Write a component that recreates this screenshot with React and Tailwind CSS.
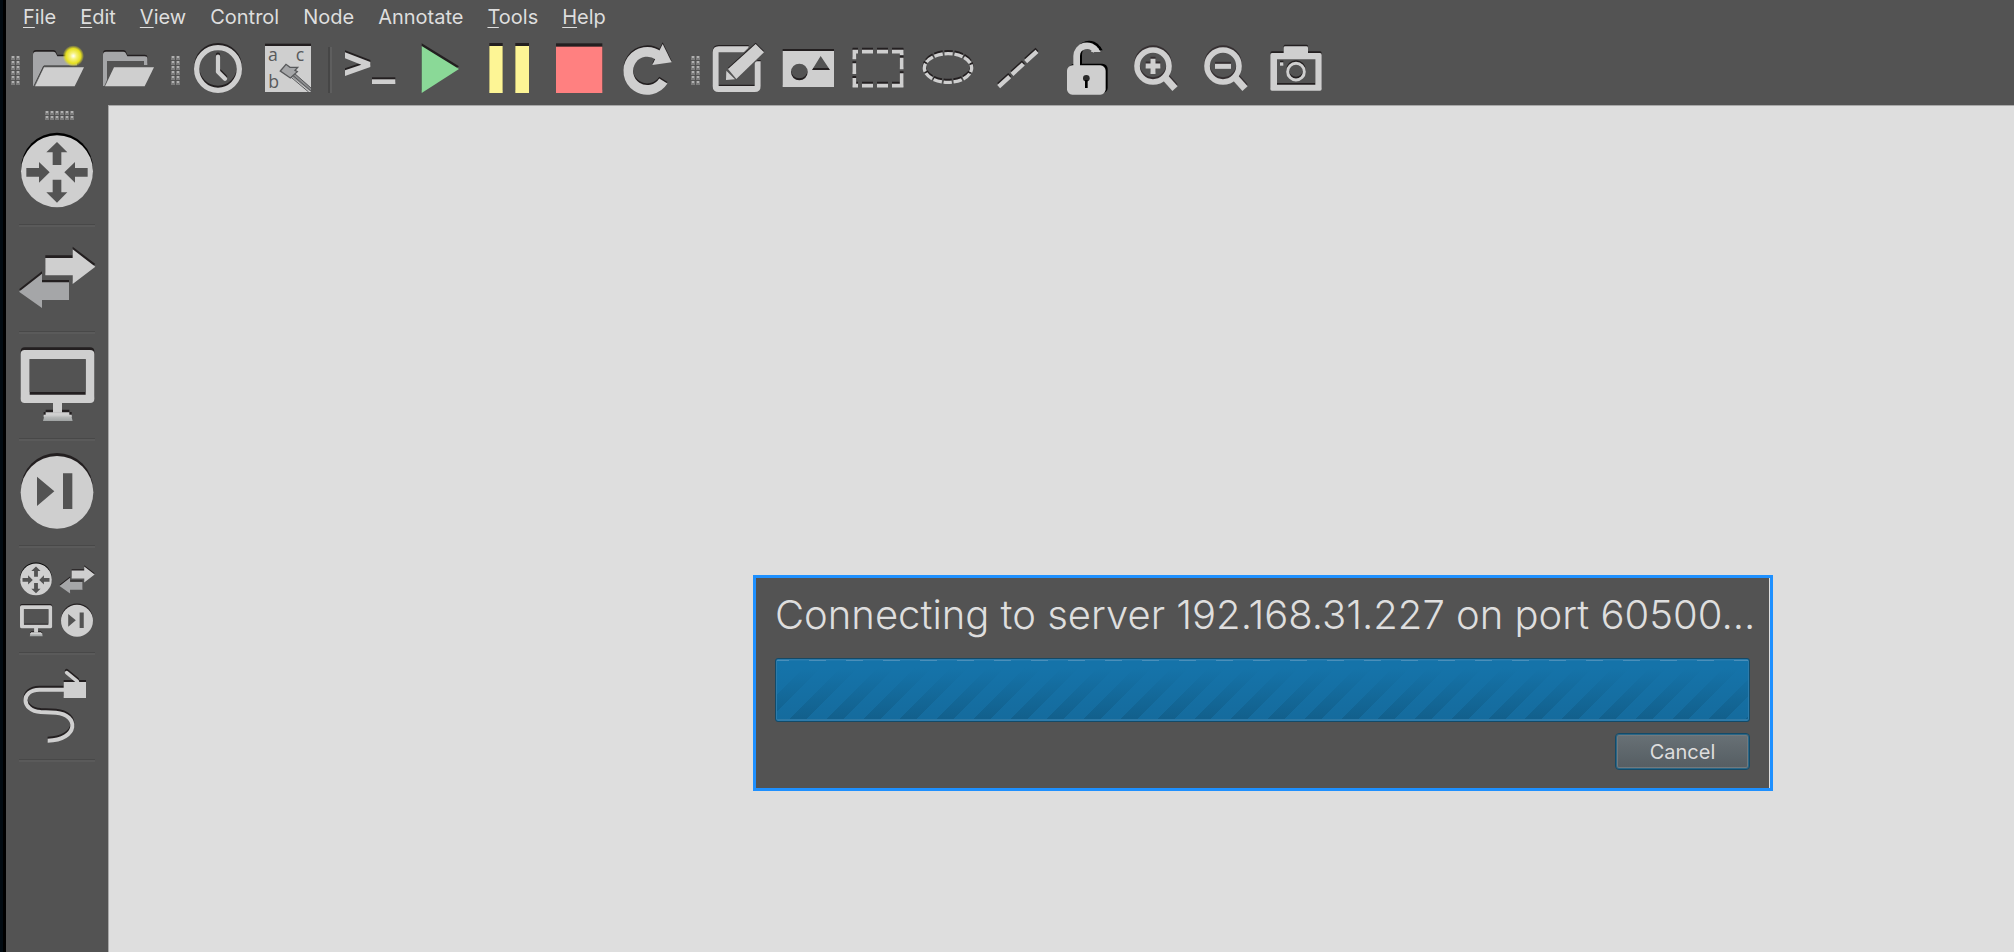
import React from "react";

const LIGHT = "#cfcfcf";

/* Draws a shape twice: a dark copy raised slightly, then the shape itself. */
function Raised({ color = LIGHT, shadow = "#231f20", lift = 6, children }) {
  return (
    <>
      <g transform={`translate(0 ${-lift})`} color={shadow}>{children}</g>
      <g color={color}>{children}</g>
    </>
  );
}

const fill = { fill: "currentColor", fillRule: "evenodd" };
const line = { fill: "none", stroke: "currentColor" };

function FolderFront({ x }) {
  return <path d={`M${x} 202H${x + 120}L${x + 92} 259H${x - 27}Z`} fill={LIGHT} />;
}

function NewFolderIcon() {
  return (
    <>
      <defs>
        <radialGradient id="glow">
          <stop offset="0" stopColor="#ffffff" />
          <stop offset="0.3" stopColor="#f6f27a" />
          <stop offset="0.7" stopColor="#e6e020" />
          <stop offset="1" stopColor="#e6e020" stopOpacity="0" />
        </radialGradient>
      </defs>
      <Raised color="#a5a6a8" lift={5}>
        <path {...fill} d="M99 258V164Q99 155 108 155H160Q167 155 170 165L172 169H224Q231 169 231 176V196H132L104 258Z" />
      </Raised>
      <path d="M131 198L102 258" stroke="#444" strokeWidth="3" />
      <FolderFront x={132} />
      <circle cx="220" cy="168" r="32" fill="url(#glow)" />
    </>
  );
}

function OpenFolderIcon() {
  return (
    <>
      <Raised color="#a5a6a8" lift={5}>
        <path {...fill} d="M309 258V164Q309 155 318 155H370Q377 155 380 165L382 169H434Q442 169 442 176V195H432V183H321V240L313 258Z" />
      </Raised>
      <FolderFront x={342} />
    </>
  );
}

function ClockIcon() {
  return (
    <Raised>
      <circle {...line} cx="654" cy="207" r="64" strokeWidth="16" />
      <path {...line} d="M654 170V215L675 236" strokeWidth="13" strokeLinecap="round" strokeLinejoin="round" />
    </Raised>
  );
}

function LabelsIcon() {
  return (
    <>
      <rect x="795" y="131" width="138" height="12" fill="#231f20" />
      <rect x="795" y="138" width="138" height="138" fill={LIGHT} />
      <g fill="#58595b" fontFamily="'Open Sans', sans-serif" fontSize="53">
        <text x="804" y="184">a</text>
        <text x="887" y="184">c</text>
        <text x="805" y="263">b</text>
      </g>
      <path d="M868 224L933 276V263L880 217Z" fill="#8c8d8f" />
      <path d="M870 229L926 276M881 218L933 264M875 223L933 273" fill="none" stroke="#58595b" strokeWidth="3" />
      <path d="M841 213L858 193L870 202L893 202L885 211L892 215L871 234Z" fill="#a5a6a8" stroke="#58595b" strokeWidth="4" />
    </>
  );
}

function TerminalIcon() {
  return (
    <Raised>
      <path {...fill} d="M75 157L151 186V201L75 228V211L124 194L75 175Z" />
      <rect {...fill} x="156" y="238" width="70" height="14" />
    </Raised>
  );
}

function PlayIcon() {
  return (
    <Raised color="#8ad997" lift={8}>
      <path {...fill} d="M305 138L417 207L305 279Z" />
    </Raised>
  );
}

function PauseIcon() {
  return (
    <Raised color="#fdf595" lift={9}>
      <path {...fill} d="M508 138H548V279H508ZM586 138H627V279H586Z" />
    </Raised>
  );
}

function StopIcon() {
  return (
    <Raised color="#ff8080" lift={10}>
      <rect {...fill} x="708" y="140" width="139" height="139" />
    </Raised>
  );
}

function ReloadIcon() {
  return (
    <Raised lift={5}>
      <path {...line} d="M1016 167A57 57 0 1 0 1030 243" strokeWidth="29" />
      <path {...fill} d="M1028 132L1055 187L997 195L1004 180Z" />
    </Raised>
  );
}

function NoteIcon() {
  return (
    <>
      <Raised lift={4}>
        <path {...line} d="M236 148H146Q137 148 137 157V258Q137 267 146 267H254Q263 267 263 258V184" strokeWidth="18" />
      </Raised>
      <path d="M169 208L257 122L290 155L196 243Z" fill="#535353" />
      <Raised lift={4}>
        <path {...fill} d="M174 207L257 132L282 157L199 237Z" />
      </Raised>
      <path d="M169 212L195 238L168 240Z" fill={LIGHT} />
    </>
  );
}

function ImageIcon() {
  return (
    <Raised>
      <path {...fill} d="M338 153H492V261H338ZM426 210H480L452 168ZM388 191A25 25 0 1 0 388 241A25 25 0 1 0 388 191Z" />
    </Raised>
  );
}

function RectIcon() {
  return (
    <Raised>
      <path {...line} strokeWidth="11" d="M548 155H564M576 155H609M621 155H654M666 155H700M548 257H564M576 257H609M621 257H654M666 257H700M553 150V178M553 190V222M553 234V262M695 150V165M695 173V208M695 220V262" />
    </Raised>
  );
}

function EllipseIcon() {
  return (
    <Raised>
      <ellipse {...line} cx="834" cy="204" rx="71" ry="43" strokeWidth="10" pathLength="120" strokeDasharray="8.3 1.7" strokeDashoffset="4" />
    </Raised>
  );
}

function LineIcon() {
  return (
    <Raised>
      <path {...line} strokeWidth="13" d="M986 260L1019 230M1026 223L1060 192M1067 185L1101 154" />
    </Raised>
  );
}

function LockShape() {
  return (
    <>
      <path {...line} d="M170 205V168A31 31 0 0 1 228 153" strokeWidth="20" />
      <path {...fill} d="M213 156H242L234 144L220 142Z" />
      <rect {...fill} x="141" y="196" width="116" height="88" rx="16" />
    </>
  );
}

function LockIcon() {
  return (
    <>
      <g color="#000" transform="translate(6 -5)"><LockShape /></g>
      <g color={LIGHT}><LockShape /></g>
      <circle cx="199" cy="235" r="10" fill="#2b2b2b" />
      <path d="M195 240H203V264H195Z" fill="#000" />
    </>
  );
}

function MagnifierIcon({ x, plus }) {
  return (
    <Raised shadow="#352f31">
      <circle {...line} cx={x} cy="198" r="48" strokeWidth="17" />
      <path {...line} d={`M${x + 34} 230L${x + 66} 266`} strokeWidth="21" />
      <path {...line} d={plus ? `M${x - 22} 198H${x + 22}M${x} 176V222` : `M${x - 24} 199H${x + 24}`} strokeWidth="15" />
    </Raised>
  );
}

function CameraIcon() {
  return (
    <Raised lift={5}>
      <path {...fill} d="M756 159H791V143Q791 139 796 139H859Q864 139 864 143V159H900Q905 159 905 165V267Q905 272 900 272H756Q751 272 751 267V165Q751 159 756 159ZM771 178V254H886V178Z" />
      <circle {...line} cx="828" cy="215" r="25" strokeWidth="9" />
      <rect {...fill} x="780" y="187" width="10" height="10" />
    </Raised>
  );
}

function RouterShape() {
  return (
    <>
      <circle cx="171" cy="206" r="108" fill="#000" />
      <circle cx="171" cy="214" r="108" fill={LIGHT} />
      <g fill="#535353">
        <path d="M171 126L202 157H184V195H158V157H139Z" />
        <path d="M171 308L202 277H184V239H158V277H139Z" />
        <path d="M149 217L117 186V204H79V230H117V248Z" />
        <path d="M193 217L225 186V204H263V230H225V248Z" />
      </g>
    </>
  );
}

function SwitchShape() {
  return (
    <>
      <Raised lift={8}>
        <path {...fill} d="M136 474H218V448L286 500L218 552V526H136Z" />
      </Raised>
      <Raised color="#a5a6a8" lift={7}>
        <path {...fill} d="M207 547H126V521L57 575L126 624V600H207Z" />
      </Raised>
    </>
  );
}

function HostShape() {
  return (
    <>
      <defs>
        <linearGradient id="base" x1="0" y1="0" x2="0" y2="1">
          <stop offset="0" stopColor="#cfcfcf" />
          <stop offset="0.4" stopColor="#b4b6b6" />
          <stop offset="1" stopColor="#9fa3a3" />
        </linearGradient>
      </defs>
      <Raised lift={8}>
        <path {...fill} d="M74 60H270Q283 60 283 72V206Q283 219 270 219H74Q62 219 62 206V72Q62 60 74 60ZM89 88V194H257V88Z" />
        <path {...fill} d="M137 247H208V254H215V262H131V254H137Z" />
      </Raised>
      <path d="M89 87H257V186H89Z" fill="#535353" />
      <path d="M159 215H186V248H159Z" fill={LIGHT} />
      <path d="M134 255H213L218 273H129Z" fill="url(#base)" />
    </>
  );
}

function NextShape() {
  return (
    <>
      <circle cx="171" cy="477" r="108" fill="#231f20" />
      <circle cx="171" cy="487" r="109" fill={LIGHT} />
      <path d="M111 440L163 484L111 528ZM189 430H217V537H189Z" fill="#535353" />
    </>
  );
}

function AllDevicesShape() {
  return (
    <>
      <g transform="translate(108 117) scale(.44) translate(-171 -211)"><RouterShape /></g>
      <g transform="translate(231 118) scale(.46) translate(-171 -532)"><SwitchShape /></g>
      <g transform="translate(108 240) scale(.436) translate(-172 -162)"><HostShape /></g>
      <g transform="translate(231 241) scale(.44) translate(-171 -484)"><NextShape /></g>
    </>
  );
}

function CableShape() {
  return (
    <Raised>
      <path {...line} strokeWidth="12" d="M192 449H118C62 449 62 512 122 516L168 518C238 524 236 600 143 602" />
      <path {...fill} d="M191 426H258V474H191Z" />
      <path {...line} strokeWidth="11" strokeLinecap="round" d="M200 398L232 424" />
    </Raised>
  );
}

const groups = [
  [
    ["New session", "66", NewFolderIcon],
    ["Open file", "276", OpenFolderIcon],
  ],
  [
    ["Snapshots", "546", ClockIcon],
    ["Interface labels", "756", LabelsIcon],
  ],
  [
    ["Console", "42", TerminalIcon],
    ["Start", "252", PlayIcon],
    ["Suspend", "462", PauseIcon],
    ["Stop", "672", StopIcon],
    ["Reload", "882", ReloadIcon],
  ],
  [
    ["Add note", "96", NoteIcon],
    ["Insert picture", "306", ImageIcon],
    ["Draw rectangle", "516", RectIcon],
    ["Draw ellipse", "726", EllipseIcon],
    ["Draw line", "936", LineIcon],
    ["Lock items", "96", LockIcon],
    ["Zoom in", "306", () => <MagnifierIcon x={399} plus />],
    ["Zoom out", "516", () => <MagnifierIcon x={609} />],
    ["Screenshot", "726", CameraIcon],
  ],
];

const devices = [
  ["Routers", 60, RouterShape],
  ["Switches", 381, SwitchShape],
  ["End devices", 12, HostShape],
  ["Security devices", 333, NextShape],
  ["All devices", 24, AllDevicesShape],
  ["Add a link", 345, CableShape],
];

function ToolGroup({ items }) {
  return (
    <div className="flex">
      {items.map(([label, x, Icon]) => (
        <button key={label} type="button" aria-label={label} className="size-[70px] shrink-0">
          <svg viewBox={`${x} 105 210 210`} className="size-full" aria-hidden="true"><Icon /></svg>
        </button>
      ))}
    </div>
  );
}

function Grip({ cols, rows }) {
  const dots = [];
  for (let r = 0; r < rows; r++) for (let c = 0; c < cols; c++) dots.push([c * 5, r * 5]);
  return (
    <svg width={cols * 5} height={rows * 5} aria-hidden="true">
      {dots.map(([x, y]) => (
        <g key={`${x}-${y}`}>
          <rect x={x} y={y + 1} width="4" height="4" fill="#7c7c7c" />
          <rect x={x + 1} y={y + 1} width="2" height="2" fill="#b0b0b0" />
        </g>
      ))}
    </svg>
  );
}

const menus = [
  ["F", "ile"],
  ["E", "dit"],
  ["V", "iew"],
  ["", "Control"],
  ["", "Node"],
  ["", "Annotate"],
  ["T", "ools"],
  ["H", "elp"],
];

function ConnectingDialog() {
  return (
    <section
      role="dialog"
      aria-labelledby="status"
      className="absolute left-[644px] top-[469px] flex w-[1020px] flex-col border-[3px] border-[#1e90ff] bg-[#535353] pt-3 pr-5 pb-[18px] pl-[19px] shadow-[inset_-1px_0_0_#dedede]"
    >
      <h1 id="status" className="whitespace-nowrap text-[40px] leading-[50px] font-light text-[#dedede]">
        Connecting to server 192.168.31.227 on port 60500...
      </h1>
      <div
        role="progressbar"
        aria-labelledby="status"
        className="mt-[18px] flex h-16 flex-col justify-between rounded-[3px] border border-[#134a68] bg-[#156a9b] bg-[linear-gradient(to_bottom,#1573a9_15%,#1573a900),repeating-linear-gradient(135deg,#125f8b_0px,#125f8b_12px,#156b9d_12px,#156b9d_26px)] p-px shadow-[inset_0_0_0_1px_#2c7bab]"
      >
        <div className="h-px bg-[repeating-linear-gradient(90deg,#4a8fba_0px,#4a8fba_12px,#1f78ac_12px,#1f78ac_32px,#4a8fba_32px,#4a8fba_37px)]" />
        <div className="h-px bg-[#2f79a5]" />
      </div>
      <button
        type="button"
        className="mt-[11px] h-[37px] w-[135px] self-end rounded-[4px] border border-[#134a68] bg-linear-to-b from-[#687176] to-[#555d62] text-[20px] leading-[26px] text-[#dedede] shadow-[inset_0_0_0_1px_#2b6787,inset_0_0_0_2px_#72797d]"
      >
        Cancel
      </button>
    </section>
  );
}

export default function App() {
  return (
    <div className="flex min-h-screen bg-[#535353] font-['Inter',sans-serif]">
      <div className="w-1.5 shrink-0 border-r-[3px] border-black bg-[#020b12]" />
      <div className="flex min-w-0 grow flex-col">
        <nav className="flex h-[35px] gap-6 pt-1 pl-[17px] text-[20px] leading-[26px] text-[#dedede]">
          {menus.map(([key, rest]) => (
            <button key={key + rest} type="button" className="h-[26px]">
              <span className="underline decoration-1 underline-offset-3">{key}</span>
              {rest}
            </button>
          ))}
        </nav>
        <div role="toolbar" aria-label="Main" className="flex h-[70px] items-center">
          <div className="flex w-4 shrink-0 justify-end pr-px"><Grip cols={2} rows={6} /></div>
          <ToolGroup items={groups[0]} />
          <div className="flex w-5 shrink-0 justify-end pr-px"><Grip cols={2} rows={6} /></div>
          <ToolGroup items={groups[1]} />
          <div className="flex w-3 shrink-0 justify-end pr-0.5">
            <div className="h-[46px] w-1 border-l-2 border-r-2 border-l-[#464646] border-r-[#5e5e5e]" />
          </div>
          <ToolGroup items={groups[2]} />
          <div className="flex w-[18px] shrink-0 justify-end pr-px"><Grip cols={2} rows={6} /></div>
          <ToolGroup items={groups[3]} />
        </div>
        <div className="flex grow">
          <aside className="w-[102px] shrink-0">
            <div className="flex h-[15px] items-end justify-center pl-1.5"><Grip cols={6} rows={2} /></div>
            {devices.map(([label, y, Shape]) => (
              <div key={label}>
                <button type="button" aria-label={label} className="block h-[104px] w-full">
                  <svg viewBox={`18 ${y} 306 312`} className="size-full" aria-hidden="true"><Shape /></svg>
                </button>
                <div className="mx-[13px] h-[3px] border-t border-t-[#484848] bg-[#5a5a5a]" />
              </div>
            ))}
          </aside>
          <main className="relative min-w-0 grow border-t border-l border-[#a8a8a8] bg-[#dedede]">
            <ConnectingDialog />
          </main>
        </div>
      </div>
    </div>
  );
}
